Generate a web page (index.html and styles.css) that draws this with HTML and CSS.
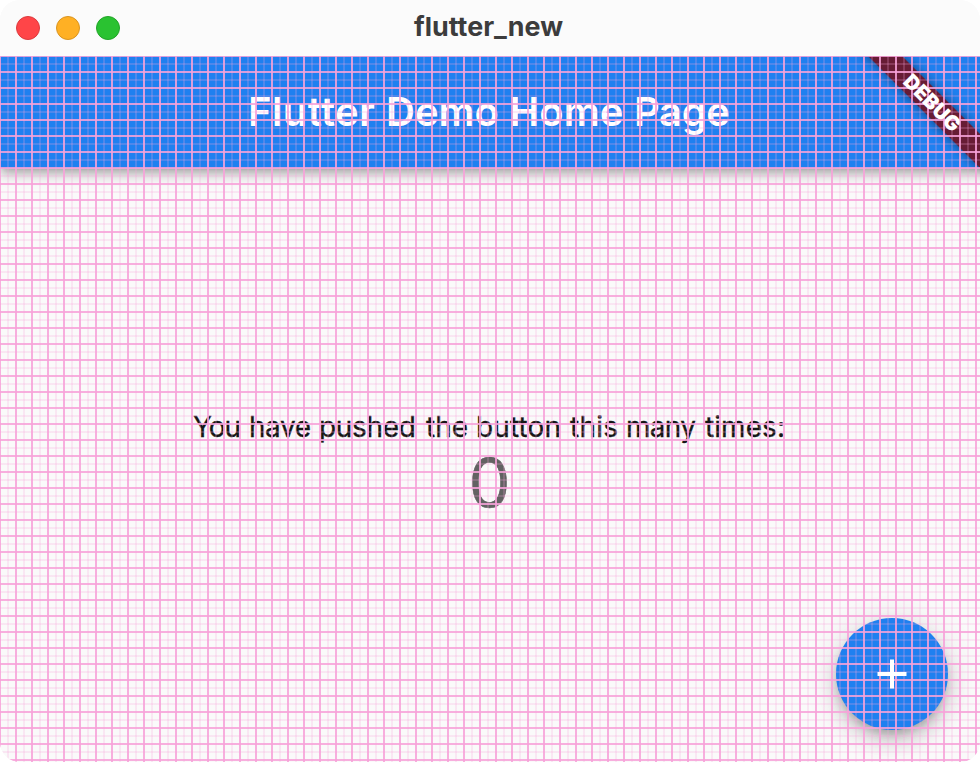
FILE: index.html
```html
<!DOCTYPE html>
<html lang="en">
<head>
<meta charset="utf-8">
<title>flutter_new</title>
<link rel="stylesheet" href="styles.css">
</head>
<body>
<div class="window">
  <header class="titlebar">
    <div class="lights"><i class="light close"></i><i class="light minimize"></i><i class="light expand"></i></div>
    <svg class="window-title" width="180" height="56"><text x="14" y="36" textLength="149" lengthAdjust="spacingAndGlyphs">flutter_new</text></svg>
  </header>
  <div class="app">
    <div class="appbar">
      <svg width="500" height="112"><text y="70"><tspan x="8" textLength="127">Flutter</tspan> <tspan x="146">Demo</tspan> <tspan x="269.5">Home</tspan> <tspan x="394" textLength="96">Page</tspan></text></svg>
    </div>
    <main class="content">
      <svg class="message" width="620" height="40"><text y="29"><tspan x="13" textLength="48">You</tspan> <tspan x="69" textLength="62">have</tspan> <tspan x="139" textLength="97">pushed</tspan> <tspan x="246" textLength="42">the</tspan> <tspan x="296" textLength="85">button</tspan> <tspan x="390" textLength="48">this</tspan> <tspan x="446" textLength="70">many</tspan> <tspan x="525" textLength="80">times:</tspan></text></svg>
      <svg class="counter" width="60" height="100"><text x="8.5" y="79" textLength="42" lengthAdjust="spacingAndGlyphs">0</text></svg>
    </main>
    <div class="fab"></div>
    <div class="banner"></div>
    <div class="grid"></div>
    <button class="fab-icon" aria-label="Increment"><svg width="48" height="48" viewBox="0 0 48 48"><path d="M24 9.5v29M9.5 24h29" fill="none" stroke="#fff" stroke-width="4"/></svg></button>
    <div class="banner banner-label">DEBUG</div>
  </div>
</div>
</body>
</html>
```
FILE: styles.css
```css
body { margin: 0; background: #fff; font-family: Inter, sans-serif; }
.window { width: 980px; height: 762px; border-radius: 20px; overflow: hidden; background: #fafafa; }
.titlebar { position: relative; height: 56px; display: flex; align-items: center; justify-content: center; background: #fbfbfb; }
.lights { position: absolute; left: 16px; top: 16px; display: flex; gap: 16px; }
.light { width: 24px; height: 24px; box-sizing: border-box; border-radius: 50%; border: 1px solid; }
.close { background: #ff4548; border-color: #db3b3e; }
.minimize { background: #ffb024; border-color: #d99420; }
.expand { background: #2ac231; border-color: #22a428; }
.window-title { font-size: 26px; font-weight: 700; fill: #3c3c3c; }
.app { position: relative; height: 706px; overflow: hidden; background: #fafafa; }
.appbar { position: relative; height: 112px; display: flex; justify-content: center; background: #1f80f0; box-shadow: 0 4px 8px -2px rgba(0,0,0,.2), 0 8px 10px rgba(0,0,0,.14), 0 2px 20px rgba(0,0,0,.12); }
.appbar svg { font-size: 40px; font-weight: 600; fill: #fff; }
.content { height: 594px; display: flex; flex-direction: column; align-items: center; padding-top: 240px; box-sizing: border-box; }
.message, .counter { flex: none; }
.message { font-size: 28px; fill: #161616; stroke: #161616; stroke-width: .3px; }
.counter { margin-top: -20px; font-size: 68px; fill: #626262; stroke: #626262; stroke-width: .6px; }
.fab, .fab-icon { position: absolute; right: 32px; bottom: 32px; width: 112px; height: 112px; border-radius: 50%; }
.fab { background: #1f80f0; box-shadow: 0 6px 10px -2px rgba(0,0,0,.2), 0 12px 20px rgba(0,0,0,.14), 0 2px 36px rgba(0,0,0,.12); }
.fab-icon { display: grid; place-items: center; padding: 0; border: 0; background: none; }
.banner { position: absolute; left: 831.5px; top: 34.5px; width: 200px; height: 24px; text-align: center; transform: rotate(45deg); background: #671c35; box-shadow: 0 0 12px rgba(0,0,0,.5); }
.banner-label { background: none; box-shadow: none; color: #fff; font-size: 20.4px; font-weight: 900; line-height: 24px; }
.grid { position: absolute; inset: 0; pointer-events: none; background:
  repeating-linear-gradient(90deg, rgba(247,162,217,.86) 0 1px, transparent 1px 15px, rgba(247,162,217,.86) 15px 16px),
  repeating-linear-gradient(180deg, rgba(247,162,217,.86) 0 1px, transparent 1px 15px, rgba(247,162,217,.86) 15px 16px),
  repeating-linear-gradient(90deg, transparent 0 7px, rgba(247,162,217,.22) 7px 9px, transparent 9px 16px),
  repeating-linear-gradient(180deg, transparent 0 7px, rgba(247,162,217,.22) 7px 9px, transparent 9px 16px); }
```
